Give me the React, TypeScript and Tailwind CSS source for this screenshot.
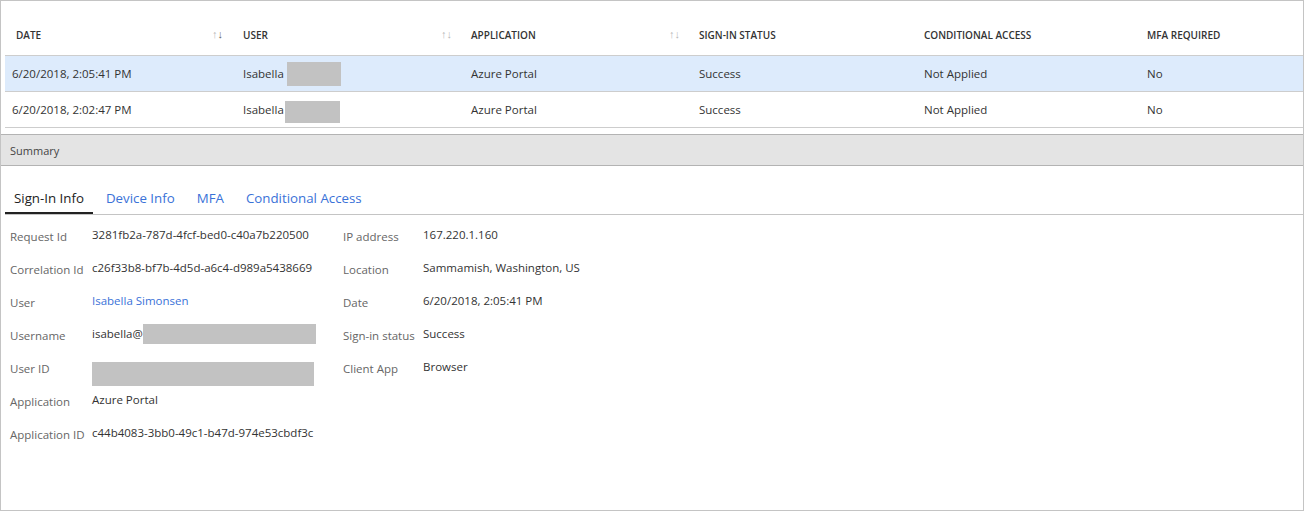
import React from "react";

const columns = [
  { key: "date", label: "DATE", sort: "down" },
  { key: "user", label: "USER", sort: "none" },
  { key: "app", label: "APPLICATION", sort: "none" },
  { key: "status", label: "SIGN-IN STATUS" },
  { key: "ca", label: "CONDITIONAL ACCESS" },
  { key: "mfa", label: "MFA REQUIRED" },
];

const rows = [
  {
    date: "6/20/2018, 2:05:41 PM",
    box: "h-[24px] w-[54px] ml-[3px]",
    selected: true,
  },
  {
    date: "6/20/2018, 2:02:47 PM",
    box: "h-[22px] w-[55px] ml-[1px] mt-[5px]",
    selected: false,
  },
];

const Redacted = ({ className }: { className: string }) => (
  <span className={`inline-block bg-[#c2c2c2] ${className}`} />
);

const SortArrows = ({ active }: { active: boolean }) => (
  <span className="text-[11px] leading-none font-normal text-[#b8b8b8] -mt-[3px]">
    ↑<span className={active ? "text-[#666]" : ""}>↓</span>
  </span>
);

const Field = ({
  label,
  labelWidth,
  children,
}: {
  label: string;
  labelWidth: string;
  children: React.ReactNode;
}) => (
  <div className="flex items-start h-[33px]">
    <div className={`${labelWidth} shrink-0 pt-[2px] text-[#666] leading-[16px]`}>{label}</div>
    <div className="flex items-start text-[#333] leading-[16px]">{children}</div>
  </div>
);

export default function App() {
  const tabs = ["Sign-In Info", "Device Info", "MFA", "Conditional Access"];

  return (
    <div className="w-[1304px] h-[511px] border border-[#c4c4c4] bg-white font-['Open_Sans',sans-serif] text-[#333] overflow-hidden">
      {/* Sign-ins table */}
      <div className="ml-[4px]">
        <div className="grid grid-cols-[228px_228px_228px_225px_223px_1fr] h-[55px] pt-[14px] border-b border-[#cdcdcd] text-[10px] font-semibold text-[#333]">
          {columns.map((c, i) => (
            <div
              key={c.key}
              className={`flex items-center justify-between ${i === 0 ? "pl-[11px] pr-[10px]" : "pl-[10px] pr-[9px]"}`}
            >
              <span>{c.label}</span>
              {c.sort && <SortArrows active={c.sort === "down"} />}
            </div>
          ))}
        </div>
        {rows.map((r) => (
          <div
            key={r.date}
            className={`grid grid-cols-[228px_228px_228px_225px_223px_1fr] h-[36px] border-b border-[#cdcdcd] text-[11.5px] items-center ${r.selected ? "bg-[#ddebfc]" : "bg-white"}`}
          >
            <div className="pl-[7px]">{r.date}</div>
            <div className="pl-[10px] flex items-center">
              Isabella
              <Redacted className={r.box} />
            </div>
            <div className="pl-[10px]">Azure Portal</div>
            <div className="pl-[10px]">Success</div>
            <div className="pl-[10px]">Not Applied</div>
            <div className="pl-[10px]">No</div>
          </div>
        ))}
      </div>

      {/* Summary bar */}
      <div className="mt-[6px] h-[32px] border-t border-b border-[#b3b3b3] bg-[#e4e4e4] flex items-center pl-[9px] pt-[3px] text-[11px] text-[#444]">
        Summary
      </div>

      {/* Tabs */}
      <div className="ml-[4px] flex gap-[4px] border-b border-[#c4c4c4] pt-[22px]">
        {tabs.map((t, i) => (
          <div
            key={t}
            className={`px-[9px] pb-[4px] leading-[20px] text-[13.3px] border-b-2 ${i === 0 ? "border-[#222] text-[#222]" : "border-transparent text-[#3a72d8]"}`}
          >
            {t}
          </div>
        ))}
      </div>

      {/* Sign-in details */}
      <div className="flex pl-[9px] pt-[12px] text-[11.5px]">
        <div className="w-[333px]">
          <Field label="Request Id" labelWidth="w-[82px]">3281fb2a-787d-4fcf-bed0-c40a7b220500</Field>
          <Field label="Correlation Id" labelWidth="w-[82px]">c26f33b8-bf7b-4d5d-a6c4-d989a5438669</Field>
          <Field label="User" labelWidth="w-[82px]">
            <span className="text-[#3a72d8]">Isabella Simonsen</span>
          </Field>
          <Field label="Username" labelWidth="w-[82px]">
            isabella@
            <Redacted className="h-[20px] w-[173px] -mt-[2px]" />
          </Field>
          <Field label="User ID" labelWidth="w-[82px]">
            <Redacted className="h-[24px] w-[222px] mt-[3px]" />
          </Field>
          <Field label="Application" labelWidth="w-[82px]">Azure Portal</Field>
          <Field label="Application ID" labelWidth="w-[82px]">c44b4083-3bb0-49c1-b47d-974e53cbdf3c</Field>
        </div>
        <div>
          <Field label="IP address" labelWidth="w-[80px]">167.220.1.160</Field>
          <Field label="Location" labelWidth="w-[80px]">Sammamish, Washington, US</Field>
          <Field label="Date" labelWidth="w-[80px]">6/20/2018, 2:05:41 PM</Field>
          <Field label="Sign-in status" labelWidth="w-[80px]">Success</Field>
          <Field label="Client App" labelWidth="w-[80px]">Browser</Field>
        </div>
      </div>
    </div>
  );
}
